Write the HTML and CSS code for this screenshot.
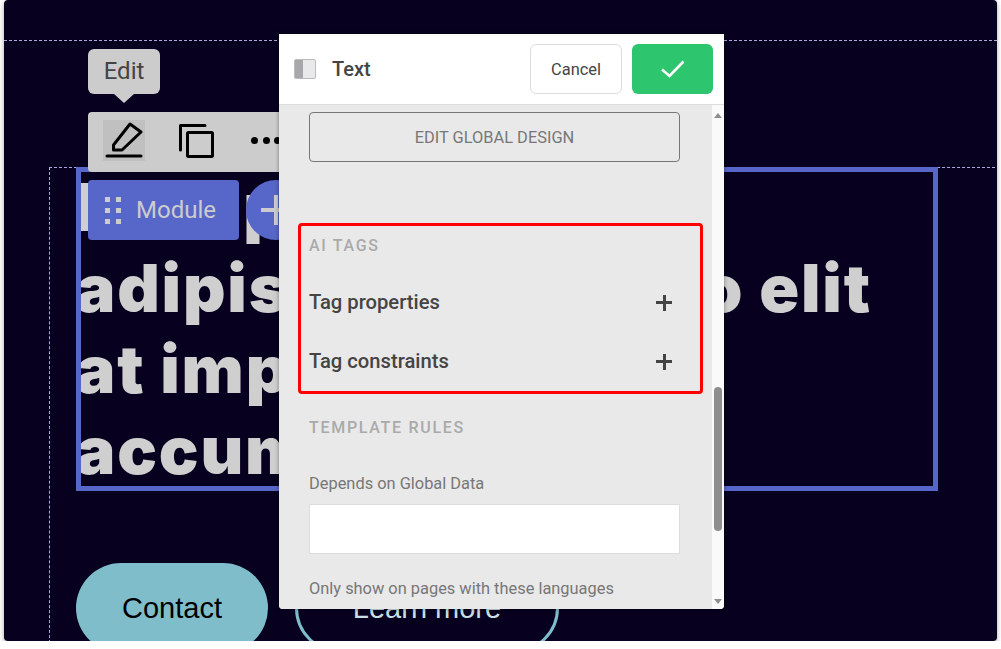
FILE: index.html
```html
<!DOCTYPE html>
<html lang="en">
<head>
    <meta charset="UTF-8">
    <meta name="viewport" content="width=device-width, initial-scale=1.0">
    <title>Text module settings</title>
    <link rel="stylesheet" href="styles.css">
</head>
<body>
    <div class="window">
        <section class="section">
            <div class="container">
                <h1 class="headline">Lore psum dolor<br>adipisicing numero elit<br>at impedit<br>accumsan</h1>
                <div class="actions">
                    <a class="btn btn-solid" href="#">Contact</a>
                    <a class="btn btn-outline" href="#">Learn more</a>
                </div>
            </div>
        </section>

        <div class="tooltip">Edit</div>
        <div class="toolbar">
            <span class="tool tool-active">
                <svg width="42" height="41" viewBox="0 0 42 41" fill="none" stroke="#000" stroke-width="3" stroke-linejoin="round" stroke-linecap="round">
                    <path d="M10.500 30V25L27 4L38 12L19 30Z"/>
                    <path d="M4 36H38"/>
                </svg>
            </span>
            <span class="tool">
                <svg width="42" height="41" viewBox="0 0 42 41" fill="none" stroke="#000" stroke-width="3" stroke-linejoin="round" stroke-linecap="round">
                    <rect x="14.500" y="12.500" width="25" height="24" rx="1"/>
                    <path d="M7.500 30V5.500H32"/>
                </svg>
            </span>
            <span class="dots"><i></i><i></i><i></i></span>
        </div>
        <div class="module-tag">
            <span class="grip"><i></i><i></i><i></i><i></i><i></i><i></i></span>
            Module
        </div>
        <div class="add-circle"></div>

        <div class="panel">
            <header class="panel-head">
                <span class="panel-icon"></span>
                <span class="panel-title">Text</span>
                <button class="cancel">Cancel</button>
                <button class="confirm">
                    <svg width="26" height="20" viewBox="0 0 26 20" fill="none" stroke="#fff" stroke-width="2.600">
                        <path d="M2 10.500L9.500 17L23.500 2.500"/>
                    </svg>
                </button>
            </header>
            <div class="panel-main">
                <div class="panel-body">
                    <button class="global-btn">EDIT GLOBAL DESIGN</button>
                    <div class="tags-box">
                        <h4 class="label">AI TAGS</h4>
                        <div class="tag-row tag-first">Tag properties <span class="plus"></span></div>
                        <div class="tag-row">Tag constraints <span class="plus"></span></div>
                    </div>
                    <h4 class="label rules">TEMPLATE RULES</h4>
                    <label class="field-label">Depends on Global Data</label>
                    <div class="field"></div>
                    <label class="field-label field-gap">Only show on pages with these languages</label>
                    <div class="field"></div>
                </div>
                <div class="scrollbar">
                    <span class="arrow arrow-up"></span>
                    <span class="thumb"></span>
                    <span class="arrow arrow-down"></span>
                </div>
            </div>
        </div>
    </div>
</body>
</html>
```

FILE: styles.css
```css
body {
    margin: 0;
    background: #fff;
    font-family: Roboto, sans-serif;
}
.window {
    position: relative;
    margin: 0 4px;
    height: 641px;
    overflow: hidden;
    background: #07011f;
    border-radius: 4px;
    box-shadow: 0 2px 5px rgba(0, 0, 0, .35);
}
.section {
    position: relative;
    top: 40px;
    padding-top: 126px;
    border-top: 1px dashed #a9a9dc;
}
.container {
    margin: 0 2px 0 45px;
    padding-left: 26px;
    border-top: 1px dashed #a9a9dc;
    border-left: 1px dashed #a9a9dc;
}
.headline {
    margin: -1px 0 0;
    width: 862px;
    height: 324px;
    outline: 5px solid #5766c9;
    outline-offset: -5px;
    color: #cfcfcf;
    font-family: Inter, sans-serif;
    font-size: 66px;
    font-weight: 900;
    line-height: 81px;
    letter-spacing: 1.800px;
    white-space: nowrap;
}
.actions {
    display: flex;
    gap: 27px;
    margin-top: 72px;
}
.btn {
    box-sizing: border-box;
    display: flex;
    align-items: center;
    justify-content: center;
    height: 90px;
    border-radius: 45px;
    font-family: "Liberation Sans", sans-serif;
    font-size: 29px;
    text-decoration: none;
}
.btn-solid {
    width: 192px;
    background: #7fbdca;
    color: #000;
}
.btn-outline {
    width: 264px;
    border: 3px solid #7fbdca;
    color: #c9dfe4;
}
.tooltip {
    position: absolute;
    left: 84px;
    top: 49px;
    width: 72px;
    height: 45px;
    border-radius: 6px;
    background: #ccc;
    color: #444;
    font-size: 24px;
    line-height: 44px;
    text-align: center;
}
.tooltip::after {
    content: "";
    position: absolute;
    left: 26px;
    top: 45px;
    border-left: 10px solid transparent;
    border-right: 10px solid transparent;
    border-top: 9px solid #ccc;
}
.toolbar {
    position: absolute;
    left: 84px;
    top: 112px;
    display: flex;
    gap: 28px;
    width: 200px;
    height: 60px;
    padding: 8px 0 0 15px;
    box-sizing: border-box;
    background: #ccc;
    border-radius: 4px 0 0 4px;
}
.tool {
    display: block;
    width: 42px;
    height: 41px;
}
.tool-active {
    background: #c0c0c0;
}
.dots {
    display: flex;
    gap: 4.500px;
    margin: 17px 0 0 8px;
}
.dots i {
    width: 7px;
    height: 7px;
    border-radius: 50%;
    background: #000;
}
.module-tag {
    position: absolute;
    left: 84px;
    top: 180px;
    display: flex;
    align-items: center;
    gap: 15px;
    width: 151px;
    height: 60px;
    padding-left: 17px;
    box-sizing: border-box;
    border-radius: 4px;
    background: #5766c9;
    color: #ccc;
    font-size: 24px;
}
.grip {
    display: grid;
    grid-template-columns: 5px 5px;
    gap: 6px;
}
.grip i {
    width: 5px;
    height: 5px;
    background: #ccc;
}
.add-circle {
    position: absolute;
    left: 242px;
    top: 180px;
    width: 60px;
    height: 60px;
    border-radius: 50%;
    background: #5766c9;
}
.add-circle::before,
.add-circle::after {
    content: "";
    position: absolute;
    background: #ccc;
}
.add-circle::before {
    left: 15px;
    top: 28px;
    width: 30px;
    height: 4px;
}
.add-circle::after {
    left: 28px;
    top: 15px;
    width: 4px;
    height: 30px;
}
.panel {
    position: absolute;
    left: 275px;
    top: 34px;
    display: flex;
    flex-direction: column;
    width: 445px;
    height: 575px;
    overflow: hidden;
    border-radius: 0 0 4px 4px;
    background: #fff;
    box-shadow: 0 0 4px rgba(0, 0, 0, .4);
}
.panel-head {
    display: flex;
    align-items: center;
    flex: none;
    height: 70px;
    padding: 0 11px 0 15px;
    border-bottom: 1px solid #ddd;
}
.panel-icon {
    box-sizing: border-box;
    width: 22px;
    height: 20px;
    border: 1px solid #bbb;
    border-radius: 2px;
    background: linear-gradient(90deg, #a8a8aa 38%, #e9e9ec 38%);
}
.panel-title {
    flex: 1;
    margin-left: 16px;
    color: #444;
    font-size: 20px;
    font-weight: 500;
}
.cancel {
    width: 92px;
    height: 50px;
    border: 1px solid #ddd;
    border-radius: 6px;
    background: #fff;
    color: #444;
    font-family: Roboto, sans-serif;
    font-size: 16.400px;
}
.confirm {
    display: flex;
    align-items: center;
    justify-content: center;
    width: 81px;
    height: 50px;
    margin-left: 10px;
    border: 0;
    border-radius: 6px;
    background: #2ec56f;
}
.panel-main {
    display: flex;
    flex: 1;
    min-height: 0;
}
.panel-body {
    flex: 1;
    padding: 7px 32px 0 30px;
    overflow: hidden;
    background: #e9e9e9;
}
.global-btn {
    display: block;
    width: 371px;
    height: 50px;
    border: 1px solid #777;
    border-radius: 4px;
    background: transparent;
    color: #777;
    font-family: Roboto, sans-serif;
    font-size: 16.400px;
}
.tags-box {
    box-sizing: border-box;
    height: 171px;
    margin: 61px -23px 0 -11px;
    padding: 11px 8px 0;
    border: 3px solid #f00;
    border-radius: 4px;
}
.label {
    margin: 0;
    color: #aaa;
    font-size: 16px;
    font-weight: 500;
    line-height: 17px;
    letter-spacing: 1.700px;
}
.rules {
    margin-top: 25px;
}
.tag-row {
    display: flex;
    align-items: center;
    justify-content: space-between;
    height: 24px;
    margin-top: 35px;
    padding-right: 20px;
    color: #444;
    font-size: 20.200px;
    font-weight: 500;
}
.tag-first {
    margin-top: 36px;
}
.plus {
    position: relative;
    width: 16px;
    height: 16px;
    margin-top: 1px;
    background:
        linear-gradient(#444, #444) center / 16px 3px no-repeat,
        linear-gradient(#444, #444) center / 3px 16px no-repeat;
}
.field-label {
    display: block;
    margin-top: 38px;
    color: #777;
    font-size: 16.400px;
    line-height: 20px;
}
.field-gap {
    margin-top: 25px;
}
.field {
    box-sizing: border-box;
    height: 50px;
    margin-top: 10px;
    border: 1px solid #ddd;
    background: #fff;
}
.scrollbar {
    position: relative;
    flex: none;
    width: 12px;
    background: #fafafa;
}
.arrow {
    position: absolute;
    left: 2px;
    border-left: 4px solid transparent;
    border-right: 4px solid transparent;
}
.arrow-up {
    top: 8px;
    border-bottom: 5px solid #8e8e8e;
}
.arrow-down {
    bottom: 5px;
    border-top: 5px solid #8e8e8e;
}
.thumb {
    position: absolute;
    left: 2px;
    top: 282px;
    width: 8px;
    height: 144px;
    border-radius: 4px;
    background: #8e8e8e;
}
```
